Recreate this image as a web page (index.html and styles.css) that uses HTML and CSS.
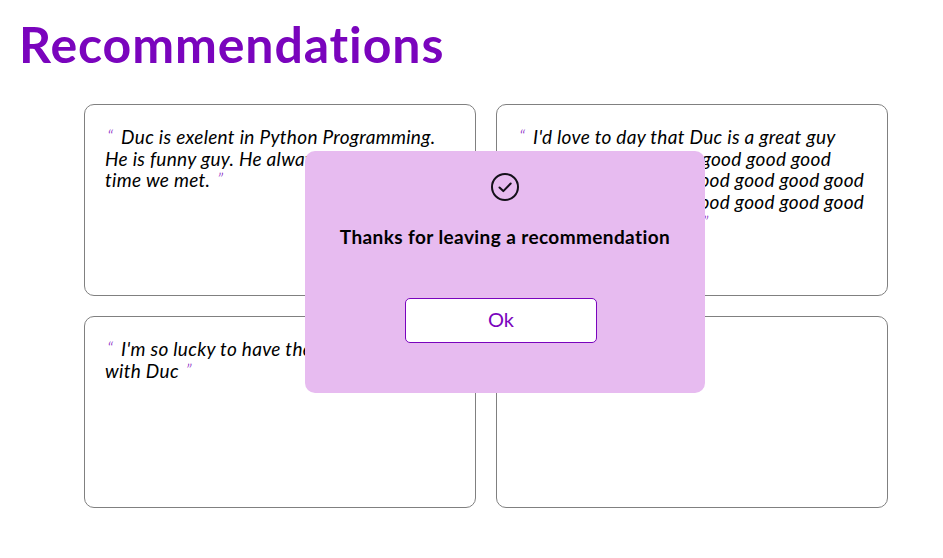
FILE: index.html
```html
<!DOCTYPE html>
<html lang="en">
<head>
  <meta charset="UTF-8" />
  <title>Recommendations</title>
  <link rel="stylesheet" href="styles.css">
</head>
<body>
  <h1 class="title">Recommendations</h1>

  <div class="grid">
    <div class="card">
      <span class="quote">“</span> Duc is exelent in Python Programming.<br>
      He is funny guy. He always smiles every<br>
      time we met. <span class="quote">”</span>
    </div>
    <div class="card">
      <span class="quote">“</span> I'd love to day that Duc is a great guy<br>
      He is really very 'good' good good good<br>
      very good good good good good good good<br>
      very good good good good good good good<br>
      good good good good, <span class="quote">”</span>
    </div>
    <div class="card">
      <span class="quote">“</span> I'm so lucky to have the chance to work<br>
      with Duc <span class="quote">”</span>
    </div>
    <div class="card"></div>
  </div>

  <div class="modal">
    <svg class="modal-icon" width="30" height="30" viewBox="0 0 30 30" fill="none" stroke="#14101a" stroke-width="2">
      <circle cx="15" cy="15" r="13" />
      <path d="M9.5 15.5l3.8 3.6 7.4-7.6" stroke-linecap="round" stroke-linejoin="round" />
    </svg>
    <p class="modal-text">Thanks for leaving a recommendation</p>
    <button class="modal-btn" type="button">Ok</button>
  </div>
</body>
</html>
```

FILE: styles.css
```css
body { margin: 0; font-family: "Lato", "Open Sans", sans-serif; color: #000; background: #fff; }
.title { margin: 0; padding: 15px 0 0 19px; font-size: 50px; line-height: 58px; font-weight: 700; color: #7a04bd; letter-spacing: 0.9px; font-variant-ligatures: none; }
.grid { display: grid; grid-template-columns: 392px 392px; grid-auto-rows: 192px; gap: 20px; margin: 31px 0 0 84px; }
.card { box-sizing: border-box; border: 1px solid #808080; border-radius: 10px; padding: 21px 20px; font-size: 19px; line-height: 21.6px; font-style: italic; letter-spacing: 0.3px; white-space: nowrap; }
.quote { color: #7a04bd; font-weight: 300; margin: 0 3px 0 2px; }
.modal { position: absolute; left: 305px; top: 151px; box-sizing: border-box; width: 400px; height: 242px; padding-top: 21px; display: flex; flex-direction: column; align-items: center; background: #e7bbf0; border-radius: 10px; }
.modal-icon { display: block; }
.modal-text { margin: 24px 0 0; font-size: 19px; line-height: 22px; font-weight: 700; letter-spacing: 0.4px; white-space: nowrap; }
.modal-btn { box-sizing: border-box; width: 192px; height: 45px; margin: 50px 8px 0 0; padding: 0 0 4px; background: #fff; border: 1px solid #7a04bd; border-radius: 5px; color: #7a04bd; font-family: inherit; font-size: 20px; }
```
